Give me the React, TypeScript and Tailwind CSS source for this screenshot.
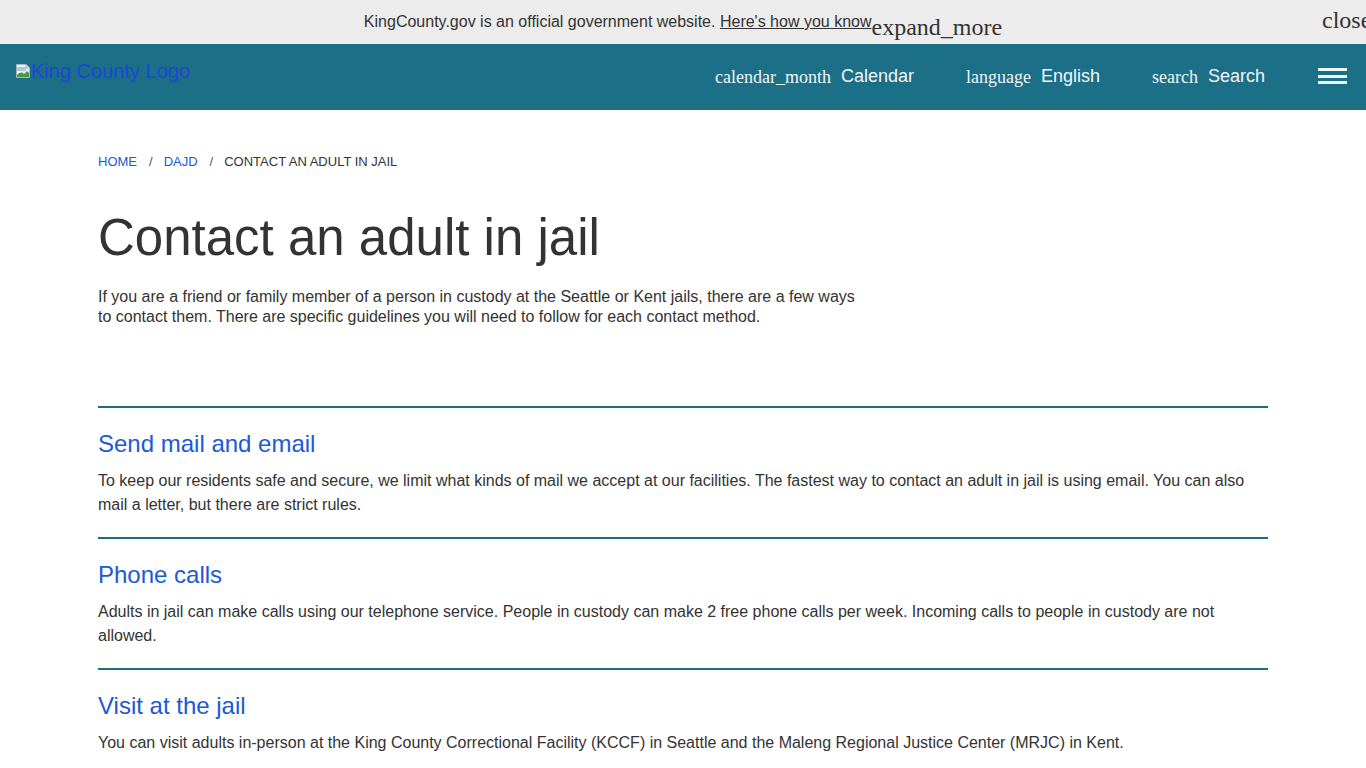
import React from "react";

const sans = { fontFamily: '"Liberation Sans", Arial, sans-serif' };
const serif = { fontFamily: '"Liberation Serif", "Times New Roman", serif' };

function BrokenImage() {
  return (
    <svg width="16" height="16" viewBox="0 0 16 16" className="shrink-0">
      <path d="M1.5 1.5h9.5l3.5 3.5v9.5h-13z" fill="#eef3f6" stroke="#a9b4bc" strokeWidth="1" />
      <path d="M11 1.5v3.5h3.5" fill="#dfe6ea" stroke="#a9b4bc" strokeWidth="1" />
      <rect x="2" y="4" width="9" height="4" fill="#8fc1e6" opacity="0.8" />
      <path d="M2 14 L2 12 C5 9 7 9 9 11 L12 8 L14 10 L14 14 Z" fill="#4a9a3c" />
    </svg>
  );
}

const sections = [
  {
    title: "Send mail and email",
    body: "To keep our residents safe and secure, we limit what kinds of mail we accept at our facilities. The fastest way to contact an adult in jail is using email. You can also mail a letter, but there are strict rules.",
  },
  {
    title: "Phone calls",
    body: "Adults in jail can make calls using our telephone service. People in custody can make 2 free phone calls per week. Incoming calls to people in custody are not allowed.",
  },
  {
    title: "Visit at the jail",
    body: "You can visit adults in-person at the King County Correctional Facility (KCCF) in Seattle and the Maleng Regional Justice Center (MRJC) in Kent.",
  },
];

export default function App() {
  return (
    <div className="w-[1366px] h-[768px] overflow-hidden bg-white text-[#333333]" style={sans}>
      {/* Official banner */}
      <div className="relative h-[44px] bg-[#ececec] overflow-hidden">
        <div className="flex justify-center items-start pt-[12px]">
          <span className="text-[16px] leading-[20px] text-[#333333]">
            KingCounty.gov is an official government website.{" "}
            <span className="underline">Here's how you know</span>
          </span>
          <span className="text-[24px] leading-[28px] mt-[1px] text-[#333333]" style={serif}>
            expand_more
          </span>
        </div>
        <span className="absolute left-[1322px] top-[6px] text-[24px] leading-[28px] text-[#333333]" style={serif}>
          close
        </span>
      </div>

      {/* Header */}
      <header className="h-[66px] bg-[#1b6f86] flex items-start">
        <div className="flex items-center pl-[15px] pt-[15px]">
          <BrokenImage />
          <span className="text-[20px] leading-[24px] text-[#1f45dc]">King County Logo</span>
        </div>
        <nav className="ml-auto flex items-baseline gap-[52px] pt-[21px] text-[#f2f6f8]">
          <div className="flex items-baseline gap-[10px]">
            <span className="text-[18px] leading-[24px]" style={serif}>calendar_month</span>
            <span className="text-[18px] leading-[24px] relative -top-[1px]">Calendar</span>
          </div>
          <div className="flex items-baseline gap-[10px]">
            <span className="text-[18px] leading-[24px]" style={serif}>language</span>
            <span className="text-[18px] leading-[24px] relative -top-[1px]">English</span>
          </div>
          <div className="flex items-baseline gap-[10px]">
            <span className="text-[18px] leading-[24px]" style={serif}>search</span>
            <span className="text-[18px] leading-[24px] relative -top-[1px]">Search</span>
          </div>
        </nav>
        <div className="ml-[53px] mr-[19px] pt-[24px] flex flex-col gap-[3.5px]">
          <span className="block w-[29px] h-[3px] bg-[#eef7fa]" />
          <span className="block w-[29px] h-[3px] bg-[#eef7fa]" />
          <span className="block w-[29px] h-[3px] bg-[#eef7fa]" />
        </div>
      </header>

      {/* Main */}
      <main className="w-[1170px] mx-auto pt-[42px]">
        <nav className="flex items-center text-[13px] leading-[20px] uppercase">
          <span className="text-[#1a5ad6]">Home</span>
          <span className="ml-[12px] mr-[11px] text-[#555555]">/</span>
          <span className="text-[#1a5ad6]">DAJD</span>
          <span className="ml-[12px] mr-[11px] text-[#555555]">/</span>
          <span className="text-[#333333]">Contact an adult in jail</span>
        </nav>

        <h1 className="mt-[35px] text-[51px] leading-[61px] font-normal text-[#333333]">
          Contact an adult in jail
        </h1>

        <p className="mt-[19px] w-[766px] text-[16px] leading-[20px] text-[#333333]">
          If you are a friend or family member of a person in custody at the Seattle or Kent jails, there are a few ways to contact them. There are specific guidelines you will need to follow for each contact method.
        </p>

        <div className="mt-[79px]">
          {sections.map((s) => (
            <section key={s.title} className="border-t-2 border-[#1d6f7a] pt-[22px] pb-[20px]">
              <h2 className="text-[24px] leading-[28px] font-normal text-[#1a5ad6]">{s.title}</h2>
              <p className="mt-[11px] text-[16px] leading-[24px] text-[#333333]">{s.body}</p>
            </section>
          ))}
        </div>
      </main>
    </div>
  );
}
